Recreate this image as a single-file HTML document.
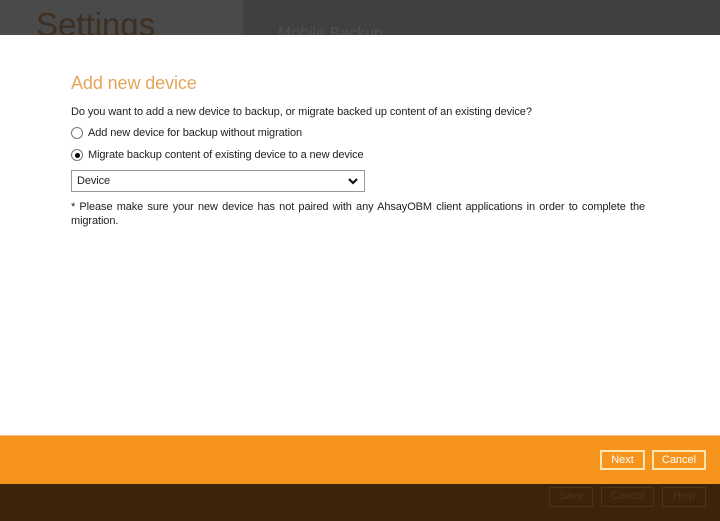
<!DOCTYPE html>
<html><head><style>
*{margin:0;padding:0;box-sizing:border-box}
body{width:720px;height:521px;position:relative;overflow:hidden;font-family:"Liberation Sans",sans-serif;background:#fff}
.top{position:absolute;left:0;top:0;width:720px;height:35px;background:#404040;overflow:hidden}
.topl{position:absolute;left:0;top:0;width:243px;height:35px;background:#4a4a4a}
.set{position:absolute;left:36px;top:6px;font-size:33px;color:#3e2f22;}
.mb{position:absolute;left:278px;top:25px;font-size:16px;color:#505050}
.t{position:absolute;color:#222;font-size:11px;white-space:nowrap;letter-spacing:-0.1px}
.radio{position:absolute;width:12px;height:12px;border:1px solid #777;border-radius:50%;background:#fff}
.dot{position:absolute;left:2.5px;top:2.5px;width:5px;height:5px;border-radius:50%;background:#000}
.sel{position:absolute;left:71px;top:170px;width:294px;height:22px;border:1px solid #999;background:#fff}
.or{position:absolute;left:0;top:435px;width:720px;height:49px;background:#f7941d;border-top:1px solid #f5c27f}
.br{position:absolute;left:0;top:484px;width:720px;height:37px;background:#3d2408}
.b{position:absolute;border:2px solid #fde6ad;color:#fff;font-size:11px;text-align:center;line-height:16px;height:20px}
.d{position:absolute;border:1px solid #4e3419;color:#4e3419;font-size:11px;text-align:center;line-height:17px;height:20px}
</style></head><body>
<div class="top"><div class="topl"></div><div class="set">Settings</div><div class="mb">Mobile Backup</div></div>
<div class="t" style="left:71px;top:73px;font-size:18px;color:#e4a55a">Add new device</div>
<div class="t" style="left:71px;top:106px">Do you want to add a new device to backup, or migrate backed up content of an existing device?</div>
<div class="radio" style="left:71px;top:127px"></div>
<div class="t" style="left:88px;top:127px">Add new device for backup without migration</div>
<div class="radio" style="left:71px;top:149px"><div class="dot"></div></div>
<div class="t" style="left:88px;top:149px">Migrate backup content of existing device to a new device</div>
<div class="sel"><span class="t" style="left:5px;top:4px">Device</span>
<svg style="position:absolute;right:6px;top:7px" width="10" height="7" viewBox="0 0 10 7"><path d="M1 1L5 5L9 1" stroke="#111" stroke-width="2.2" fill="none"/></svg></div>
<div class="t" style="left:71px;top:200px;width:574px;white-space:normal;text-align:justify;text-align-last:left;line-height:14px">* Please make sure your new device has not paired with any AhsayOBM client applications in order to complete the migration.</div>
<div class="or"></div>
<div class="b" style="left:600px;top:450px;width:45px">Next</div>
<div class="b" style="left:652px;top:450px;width:54px">Cancel</div>
<div class="br"></div>
<div class="d" style="left:549px;top:487px;width:44px">Save</div>
<div class="d" style="left:601px;top:487px;width:53px">Cancel</div>
<div class="d" style="left:662px;top:487px;width:44px">Help</div>
</body></html>
